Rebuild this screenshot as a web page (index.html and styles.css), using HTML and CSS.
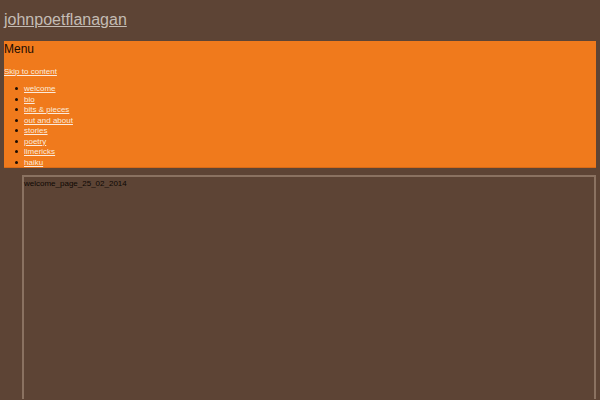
FILE: index.html
```html
<!DOCTYPE html>
<html lang="en">
<head>
    <meta charset="UTF-8">
    <meta name="viewport" content="width=device-width, initial-scale=1.0">
    <title>johnpoetflanagan</title>
    <link rel="stylesheet" href="styles.css">
</head>
<body>
    <header class="site-header">
        <a class="site-title" href="#">johnpoetflanagan</a>
    </header>

    <nav class="main-nav">
        <h2 class="menu-title">Menu</h2>
        <a class="skip-link" href="#content">Skip to content</a>
        <ul class="menu">
            <li><a href="#">welcome</a></li>
            <li><a href="#">bio</a></li>
            <li><a href="#">bits &amp; pieces</a></li>
            <li><a href="#">out and about</a></li>
            <li><a href="#">stories</a></li>
            <li><a href="#">poetry</a></li>
            <li><a href="#">limericks</a></li>
            <li><a href="#">haiku</a></li>
        </ul>
    </nav>

    <div class="content-frame" id="content">
        <p class="frame-name">welcome_page_25_02_2014</p>
    </div>
</body>
</html>
```

FILE: styles.css
```css
body, html {
    margin: 0;
    padding: 0;
}
body {
    background-color: #5d4435;
    font-family: "Liberation Sans", Arial, sans-serif;
    padding: 4px 4px 0;
}
.site-header {
    padding-top: 7px;
    height: 30px;
}
.site-title {
    font-size: 16px;
    line-height: 18px;
    color: #c4bcb4;
}
.main-nav {
    background-color: #f07a1c;
    border-bottom: 1px solid #d86a16;
    height: 126px;
}
.menu-title {
    margin: 0;
    padding-top: 1px;
    font-size: 12px;
    line-height: 14px;
    font-weight: normal;
    color: #1c0c02;
}
.skip-link {
    display: block;
    margin-top: 11px;
    font-size: 8px;
    line-height: 10.5px;
    color: #fbeadb;
}
.menu {
    margin: 6.5px 0 0;
    padding-left: 20px;
    list-style: none;
    font-size: 8px;
    line-height: 10.5px;
}
.menu li::before {
    content: "";
    display: inline-block;
    width: 3px;
    height: 3px;
    margin-left: -9px;
    margin-right: 6px;
    border-radius: 50%;
    background-color: #1c0c02;
    vertical-align: 1px;
}
.menu a {
    color: #fbeadb;
}
.content-frame {
    margin: 7px 0 0 18px;
    border: 2px solid #8a7261;
    border-bottom: none;
    height: 222px;
}
.frame-name {
    margin: 0;
    padding-top: 2px;
    font-size: 8px;
    line-height: 10px;
    color: #0e0804;
}
```
